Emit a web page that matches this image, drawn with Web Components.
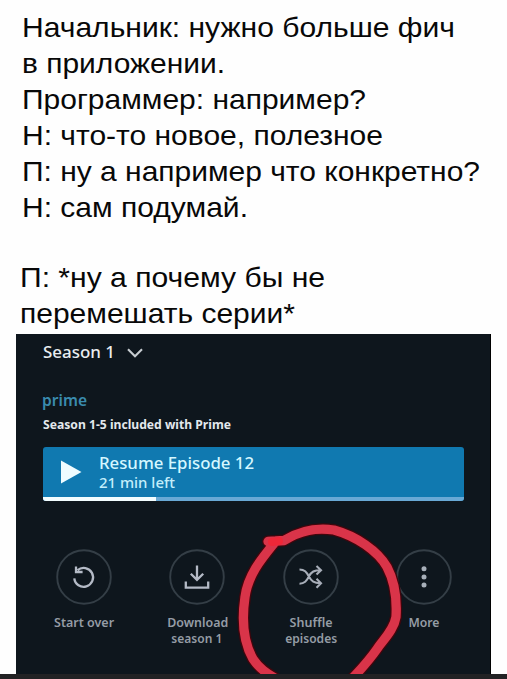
<!DOCTYPE html>
<html lang="ru"><head><meta charset="utf-8"><title>Shuffle episodes</title>
<style>html,body{margin:0;background:#fefefe;height:679px;overflow:hidden}</style></head><body>
<meme-page></meme-page>
<script>
// A single line of text, scaled horizontally to the width given in "w".
class FitText extends HTMLElement{
  connectedCallback(){
    const r=this.attachShadow({mode:'open'});
    r.innerHTML=`<style>:host{display:block;white-space:nowrap}span{display:inline-block;transform-origin:0 50%}:host([center]) {text-align:center}:host([center]) span{transform-origin:50% 50%}</style><span><slot></slot></span>`;
    const s=r.querySelector('span'),w=+this.getAttribute('w');
    if(w){const n=s.getBoundingClientRect().width;s.style.transform=`scaleX(${w/n})`;}
  }
}
customElements.define('fit-text',FitText);

class DialogText extends HTMLElement{
  connectedCallback(){
    this.attachShadow({mode:'open'}).innerHTML=`<style>
    :host{display:block;height:334px;box-sizing:border-box;padding:9px 0 0 22px;font:28.3px/36px "Liberation Sans",Arial,sans-serif;color:#080808}
    .last{margin:34px 0 0 -2px}</style>
    <fit-text w="433">Начальник: нужно больше фич</fit-text>
    <fit-text w="203">в приложении.</fit-text>
    <fit-text w="344">Программер: например?</fit-text>
    <fit-text w="361">Н: что-то новое, полезное</fit-text>
    <fit-text w="458">П: ну а например что конкретно?</fit-text>
    <fit-text w="226">Н: сам подумай.</fit-text>
    <div class="last"><fit-text w="305">П: *ну а почему бы не</fit-text>
    <fit-text w="275">перемешать серии*</fit-text></div>`;
  }
}
customElements.define('dialog-text',DialogText);

class ResumeBar extends HTMLElement{
  connectedCallback(){
    this.attachShadow({mode:'open'}).innerHTML=`<style>
    :host{display:flex;flex-direction:column;width:421px;height:54px;background:#1079b0;border-radius:3px;overflow:hidden;color:#d5f7ff}
    .row{display:flex;flex:1;padding-left:18px}
    svg{width:21px;height:24px;margin-top:13px}
    .t{margin-left:17px;padding-top:6px;font:500 15.5px/20px "Noto Sans",sans-serif}
    .s{font-size:14px;line-height:20px;color:#c3eefb}
    .bar{height:4.5px;background:#69a9d5}.bar i{display:block;height:100%;width:113px;background:#f2fdff}</style>
    <div class="row"><svg viewBox="0 0 21 24"><path d="M0 .5v23L20.5 12z" fill="#effcff"/></svg>
    <div class="t"><fit-text w="155">Resume Episode 12</fit-text><fit-text class="s" w="76">21 min left</fit-text></div></div>
    <div class="bar"><i></i></div>`;
  }
}
customElements.define('resume-bar',ResumeBar);

class ActionButton extends HTMLElement{
  connectedCallback(){
    const icons={
      restart:'<path d="M18.3 29.3A9.4 9.4 0 1 0 21.6 21.2M20 17.400v5.600h6.600" stroke-width="2.3"/>',
      download:'<path d="M28 16.500v14M21.800 24.700l6.200 6.200 6.200-6.200M16.800 32.500v6.200h22.400v-6.200" stroke-width="2.3"/>',
      shuffle:'<path d="M16.500 20.500c5 0 7 2.400 9.400 7 2.700 4.900 5 6.700 11.600 6.700M16.500 34.700c5 0 7-2.600 9.400-7.200 2.500-4.900 5.300-6.300 11.600-6.300M33.500 17l4.500 4.200-4.500 4.200M33.500 29.800l4.500 4.400-4.500 4.500" stroke-width="2.1" stroke="#a8aeb9"/>',
      more:'<g fill="#a7afb9" stroke="none"><circle cx="28" cy="19.800" r="2.500"/><circle cx="28" cy="28" r="2.500"/><circle cx="28" cy="36" r="2.500"/></g>'};
    this.attachShadow({mode:'open'}).innerHTML=`<style>
    :host{display:flex;flex-direction:column;align-items:center;width:113.5px;color:#959ca5;font:600 11.7px/16px "Noto Sans",sans-serif}
    svg{width:56px;height:56px;margin-bottom:9px}</style>
    <svg viewBox="0 0 56 56" fill="none" stroke="#b4bac6"><circle cx="28" cy="28" r="26.8" stroke="#343e46" stroke-width="1.9"/>${icons[this.getAttribute('icon')]}</svg><slot></slot>`;
  }
}
customElements.define('action-button',ActionButton);

class PrimePanel extends HTMLElement{
  connectedCallback(){
    const loop='M268 541.5L284 540.5C301 530 316 527.5 334 530C356 536 378 551 387 567C395 582 397 600 396 617C394 630 383 640 377 649C368 662 360 670 350 681M276 541C263 557 248 574 245 597C241 624 244 643 253 659C259 668 266 673 278 680';
    this.attachShadow({mode:'open'}).innerHTML=`<style>
    :host{display:block;position:relative;box-sizing:border-box;margin-left:15.5px;width:475.5px;height:340px;background:#0e161d;border-right:1px solid #000;padding-left:27.5px;overflow:hidden;font-family:"Noto Sans",sans-serif}
    .season{display:flex;align-items:center;gap:12px;height:20px;padding-top:8px;color:#e9edf0;font-size:16.5px;font-weight:500;line-height:20px}
    .season svg{width:16px;height:10px;margin-top:1px}
    .prime{margin:27px 0 0 -1px;color:#3a8bae;font-size:16.5px;font-weight:600;line-height:22px}
    .inc{margin-top:6px;color:#e3e8ec;font-size:12px;font-weight:700;line-height:16px}
    resume-bar{margin-top:14px}
    .actions{display:flex;margin:48px 0 0 -16px}
    .mark{position:absolute;left:-15.5px;top:0;width:507px;height:340px}</style>
    <div class="season"><fit-text w="72" style="width:72px">Season 1</fit-text><svg viewBox="0 0 16 10" fill="none" stroke="#c7ccd1" stroke-width="2.1"><path d="M1 1.2l7 7 7-7"/></svg></div>
    <fit-text class="prime" w="45">prime</fit-text>
    <fit-text class="inc" w="188">Season 1-5 included with Prime</fit-text>
    <resume-bar></resume-bar>
    <div class="actions">
      <action-button icon="restart"><fit-text center w="60">Start over</fit-text></action-button>
      <action-button icon="download"><fit-text center w="61">Download</fit-text><fit-text center w="51">season 1</fit-text></action-button>
      <action-button icon="shuffle"><fit-text center w="43">Shuffle</fit-text><fit-text center w="52">episodes</fit-text></action-button>
      <action-button icon="more"><fit-text center w="31">More</fit-text></action-button>
    </div>
    <svg class="mark" viewBox="0 334 507 340" fill="none" stroke-linecap="round" stroke-linejoin="round">
      <path d="${loop}" stroke="#40060d" stroke-width="12"/>
      <path d="${loop}" stroke="#d93449" stroke-width="9.3"/>
      <path d="M272 542l7-1" stroke="#ef2738" stroke-width="8"/>
    </svg>`;
  }
}
customElements.define('prime-panel',PrimePanel);

class MemePage extends HTMLElement{
  connectedCallback(){
    this.attachShadow({mode:'open'}).innerHTML=`<style>:host{display:flex;flex-direction:column;width:507px;height:679px;overflow:hidden}
    .foot{height:5px;background:#222224}</style><dialog-text></dialog-text><prime-panel></prime-panel><div class="foot"></div>`;
  }
}
customElements.define('meme-page',MemePage);
</script></body></html>
